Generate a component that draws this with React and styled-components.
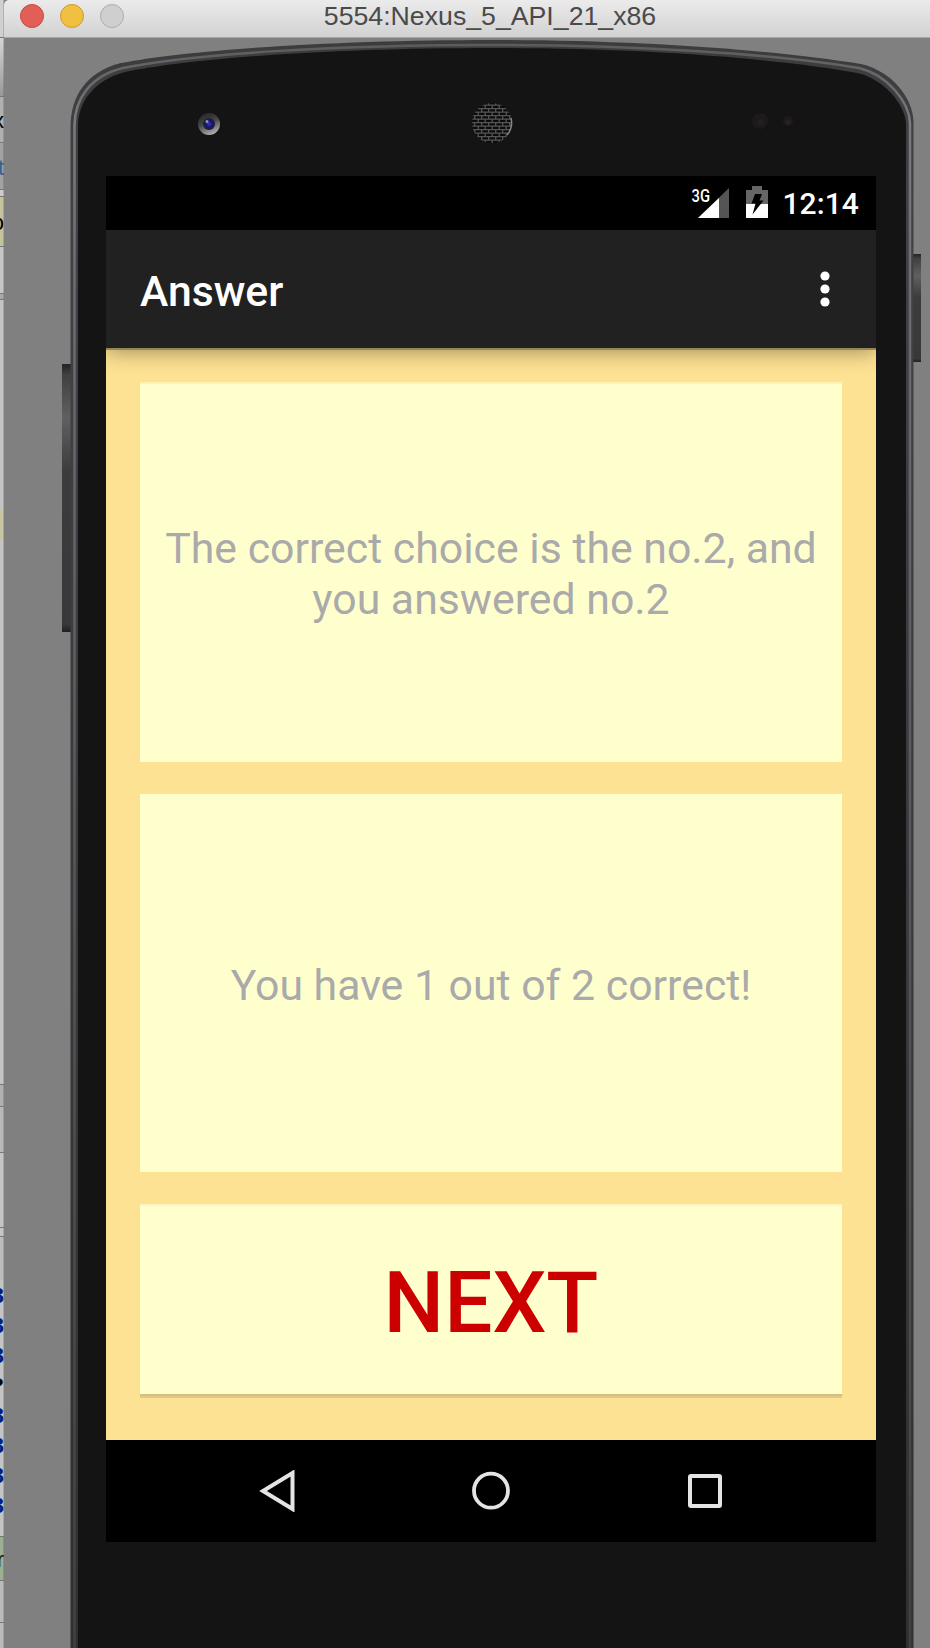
import React from 'react';
import styled, { createGlobalStyle } from 'styled-components';

const Global = createGlobalStyle`
  * { box-sizing: border-box; }
  body { margin: 0; background: #808080; font-family: Roboto, sans-serif; }
`;

const Desktop = styled.div`
  display: flex;
  width: 930px;
  height: 1648px;
  overflow: hidden;
  background: #808080;
`;

/* Edge of the editor window lying behind the emulator */
const BehindWindow = styled.div`
  flex: none;
  width: 4px;
  height: 1648px;
  display: flex;
  flex-direction: column;
  overflow: hidden;
`;

const Strip = styled.div`
  flex: none;
  height: ${(p) => p.$h}px;
  background: ${(p) => p.$bg || '#c4c4c4'};
  border-bottom: ${(p) => (p.$line ? '1px solid #777' : '0')};
  box-shadow: inset -1px 0 rgba(0, 0, 0, 0.15);
  color: ${(p) => p.$color || '#000'};
  font: ${(p) => (p.$bold ? 'bold' : 'normal')} 22px/${(p) => p.$h + 2}px 'Liberation Sans', Arial, sans-serif;
  overflow: hidden;
  display: flex;
  justify-content: flex-end;
`;

const EmulatorWindow = styled.div`
  flex: none;
  width: 926px;
  height: 1648px;
  display: flex;
  flex-direction: column;
`;

const TitleBar = styled.header`
  flex: none;
  height: 38px;
  display: grid;
  grid-template-columns: 120px 1fr 74px;
  align-items: center;
  background: linear-gradient(#ebebeb, #d2d2d2);
  border-bottom: 1px solid #a8a8a8;
  border-top-left-radius: 5px;
`;

const Lights = styled.div`
  display: flex;
  gap: 16px;
  padding: 0 0 5px 16px;
`;

const Light = styled.span`
  width: 24px;
  height: 24px;
  border-radius: 50%;
  background: ${(p) => p.$fill};
  border: 1px solid ${(p) => p.$edge};
`;

const WindowTitle = styled.h1`
  margin: 0;
  padding-bottom: 5px;
  text-align: center;
  font: 400 26.7px/32px 'Liberation Sans', Arial, sans-serif;
  color: #4a4a4a;
  white-space: nowrap;
`;

const Device = styled.main`
  position: relative;
  flex: 1;
  display: flex;
  flex-direction: column;
  padding: 138px 0 0 102px;
`;

const Shell = styled.svg`
  position: absolute;
  left: 0;
  top: 0;
`;

const Screen = styled.section`
  position: relative;
  width: 770px;
  height: 1366px;
  display: flex;
  flex-direction: column;
  overflow: hidden;
  background: #000;
`;

const StatusBar = styled.div`
  flex: none;
  height: 54px;
  display: flex;
  align-items: center;
  justify-content: flex-end;
  padding-right: 17px;
  color: #fff;
`;

const Clock = styled.span`
  padding-top: 2px;
  font-size: 30px;
  font-weight: 500;
  line-height: 52px;
  letter-spacing: 0.1px;
`;

const AppBar = styled.div`
  flex: none;
  position: relative;
  height: 118px;
  display: flex;
  align-items: center;
  justify-content: space-between;
  padding: 0 45px 0 34px;
  background: #212121;
  box-shadow: 0 2px 0 #988754, 0 4px 20px rgba(0, 0, 0, 0.38);
`;

const AppTitle = styled.h2`
  margin: 0;
  padding-top: 4px;
  font-size: 42.7px;
  font-weight: 500;
  color: #fff;
`;

const Content = styled.div`
  flex: none;
  height: 1092px;
  display: flex;
  flex-direction: column;
  gap: 32px;
  padding: 34px 34px 0;
  background: #fee293;
`;

const Card = styled.div`
  flex: none;
  height: ${(p) => p.$h}px;
  display: flex;
  align-items: center;
  justify-content: center;
  text-align: center;
  padding-top: 2px;
  background: #ffffce;
  border-top: 2px solid ${(p) => p.$edge || '#ffffce'};
  color: #aaa;
  font-size: 42.8px;
  line-height: 51px;
  white-space: nowrap;
`;

const NextButton = styled.button`
  flex: none;
  height: 190px;
  border: 0;
  border-top: 2px solid #fef5c0;
  padding: 6px 0 0;
  background: #ffffce;
  box-shadow: 0 2px #d5bf7c, 0 4px #deca86;
  color: #c00;
  font: 500 85.4px/100px Roboto, sans-serif;
`;

const NavBar = styled.nav`
  flex: none;
  height: 102px;
  display: flex;
  align-items: center;
  justify-content: space-between;
  padding: 0 152px 0 152px;
`;

const sliver = [
  { h: 38, bg: '#d0d0d0', line: true },
  { h: 59, bg: 'linear-gradient(#d5d5d5,#999)', line: true },
  { h: 46, bg: '#b0b0b0', line: true, glyph: 'x' },
  { h: 47, bg: '#a2a2a2', line: true, glyph: 't', color: '#326097' },
  { h: 7, bg: '#ccc', line: true },
  { h: 50, bg: '#c5c39c', line: true, glyph: 'o' },
  { h: 47, bg: '#c6c6c6', line: true },
  { h: 6, bg: '#aaa', line: true },
  { h: 210, bg: '#c4c4c4' },
  { h: 30, bg: '#c7c5a4' },
  { h: 545, bg: '#c4c4c4', line: true },
  { h: 22, bg: '#b0b0b0', line: true },
  { h: 46, bg: '#b8b8b8', line: true },
  { h: 75, bg: '#c5c5c5', line: true },
  { h: 9, bg: '#c5c5c5', line: true },
  { h: 43, bg: '#bcbcbc' },
  { h: 30, glyph: '3', color: '#001d85', bold: true },
  { h: 30, glyph: '3', color: '#001d85', bold: true },
  { h: 30, glyph: '3', color: '#001d85', bold: true },
  { h: 30, glyph: '?', color: '#000', bold: true },
  { h: 30, glyph: '3', color: '#001d85', bold: true },
  { h: 30, glyph: '3', color: '#001d85', bold: true },
  { h: 30, glyph: '3', color: '#001d85', bold: true },
  { h: 30, glyph: '3', color: '#001d85', bold: true },
  { h: 17, bg: '#c4c4c4', line: true },
  { h: 44, bg: '#9bb091', line: true, glyph: 'r', color: '#2a0500' },
  { h: 42, bg: '#bbb', line: true },
  { h: 30, bg: '#bbb' },
];

function DeviceShell() {
  return (
    <Shell width="926" height="1610" viewBox="0 0 926 1610" aria-hidden="true">
      <defs>
        <linearGradient id="rim" x1="0" y1="0" x2="0" y2="1">
          <stop offset="0" stopColor="#3c3c3d" />
          <stop offset=".1" stopColor="#424246" />
          <stop offset="1" stopColor="#303031" />
        </linearGradient>
        <linearGradient id="shine" x1="0" y1="0" x2="0" y2="1">
          <stop offset="0" stopColor="#5c5c60" />
          <stop offset=".05" stopColor="#7c7c80" />
          <stop offset=".15" stopColor="#6c6c72" />
          <stop offset=".5" stopColor="#57575c" />
          <stop offset="1" stopColor="#414142" />
        </linearGradient>
        <linearGradient id="key" x1="0" y1="0" x2="0" y2="1">
          <stop offset="0" stopColor="#222" />
          <stop offset=".04" stopColor="#404040" />
          <stop offset=".2" stopColor="#606060" />
          <stop offset=".4" stopColor="#3c3c3c" />
          <stop offset=".97" stopColor="#383838" />
          <stop offset="1" stopColor="#1f1f1f" />
        </linearGradient>
        <radialGradient id="lens">
          <stop offset="0" stopColor="#3a3ab0" />
          <stop offset=".5" stopColor="#17177a" />
          <stop offset="1" stopColor="#20202c" />
        </radialGradient>
        <linearGradient id="lensRing" x1="0.2" y1="0" x2=".6" y2="1">
          <stop offset="0" stopColor="#242424" />
          <stop offset=".45" stopColor="#444" />
          <stop offset="1" stopColor="#b0b0b0" />
        </linearGradient>
        <pattern id="mesh" width="7" height="7" patternUnits="userSpaceOnUse">
          <rect width="7" height="7" fill="#0b0b0b" />
          <path d="M0 .7H7M0 4.2H7M1.7 .7V4.2M5.200 4.200V7.700" stroke="#555" strokeWidth="1.3" />
        </pattern>
        <clipPath id="speaker"><circle cx="488" cy="85" r="20" /></clipPath>
      </defs>
      <rect x="58" y="326" width="10" height="268" fill="url(#key)" />
      <rect x="909" y="216" width="8" height="108" fill="url(#key)" />
      <path d="M66.500 1610 V88 C67 58 82 34 117 25 C190 11 340 2 488 2 C635 2 771 12 857 26 C888 33 909 60 909.500 84 V1610 Z" fill="url(#rim)" />
      <path d="M70.500 1610 V87 C71 61 86 38 119 30 C192 15 340 7 488 7 C635 7 771 16 855 30 C884 37 905 64 906 85 V1610" fill="none" stroke="url(#shine)" strokeWidth="2.500" />
      <path d="M74 1610 V88 C74 63 91 42 121 34 C194 19 340 10 488 10 C635 10 771 20 853 35 C880 41 901 66 902 86 V1610 Z" fill="#141414" />
      <circle cx="205" cy="86" r="11" fill="url(#lensRing)" />
      <circle cx="205" cy="86" r="6" fill="url(#lens)" />
      <circle cx="203" cy="83.500" r="1.500" fill="#8d97c0" />
      <g clipPath="url(#speaker)"><rect x="468" y="65" width="40" height="40" fill="url(#mesh)" /></g>
      <path d="M503 97A19 19 0 0 0 507 80" fill="none" stroke="#858585" strokeWidth="1.500" />
      <circle cx="756" cy="83" r="8" fill="#1c1b1b" />
      <circle cx="757" cy="84" r="3" fill="#281e1d" />
      <circle cx="784" cy="83" r="5" fill="#1e1b1b" />
      <circle cx="784" cy="84" r="2.500" fill="#2a2220" />
    </Shell>
  );
}

function StatusIcons() {
  return (
    <svg width="91" height="54" viewBox="0 0 91 54" aria-label="3G signal, battery charging">
      <text x="0.500" y="25.500" fill="#fff" fontFamily="Roboto, sans-serif" fontWeight="500" fontSize="18.500" textLength="18.500" lengthAdjust="spacingAndGlyphs">3G</text>
      <path d="M38 12V42H7Z" fill="#555" />
      <path d="M28 22V42H7Z" fill="#fff" />
      <path d="M61 10H71V14H77V28H55V14H61Z" fill="#666" />
      <path d="M55 28H77V42H55Z" fill="#fff" />
      <path d="M64 18H71L68.500 24.500H72.500L61.500 38.500L64.500 27.500H60.500Z" fill="#000" />
    </svg>
  );
}

export default function App() {
  return (
    <>
      <Global />
      <Desktop>
        <BehindWindow>
          {sliver.map((s, i) => (
            <Strip key={i} $h={s.h} $bg={s.bg} $line={s.line} $color={s.color} $bold={s.bold}>
              {s.glyph}
            </Strip>
          ))}
        </BehindWindow>
        <EmulatorWindow>
          <TitleBar>
            <Lights>
              <Light $fill="#e25f58" $edge="#c84a43" />
              <Light $fill="#f0c040" $edge="#cf9a2c" />
              <Light $fill="#cfcfcf" $edge="#acacac" />
            </Lights>
            <WindowTitle>5554:Nexus_5_API_21_x86</WindowTitle>
          </TitleBar>
          <Device>
            <DeviceShell />
            <Screen>
              <StatusBar>
                <StatusIcons />
                <Clock>12:14</Clock>
              </StatusBar>
              <AppBar>
                <AppTitle>Answer</AppTitle>
                <svg width="12" height="36" viewBox="0 0 12 36" fill="#fff" aria-label="More options">
                  <circle cx="6" cy="5" r="4.600" />
                  <circle cx="6" cy="18" r="4.600" />
                  <circle cx="6" cy="31" r="4.600" />
                </svg>
              </AppBar>
              <Content>
                <Card $h={380} $edge="#fef3b2">The correct choice is the no.2, and<br />you answered no.2</Card>
                <Card $h={378}>You have 1 out of 2 correct!</Card>
                <NextButton>NEXT</NextButton>
              </Content>
              <NavBar>
                <svg width="38" height="42" viewBox="0 0 38 42" aria-label="Back">
                  <path d="M34.500 3V39L5 21Z" fill="none" stroke="#e4e4e4" strokeWidth="4" />
                </svg>
                <svg width="38" height="40" viewBox="0 0 38 40" aria-label="Home">
                  <ellipse cx="19" cy="19.700" rx="17" ry="17" fill="none" stroke="#e4e4e4" strokeWidth="3.800" />
                </svg>
                <svg width="38" height="40" viewBox="0 0 38 40" aria-label="Recent apps">
                  <rect x="4" y="5" width="30" height="30" rx="1" fill="none" stroke="#e4e4e4" strokeWidth="4" />
                </svg>
              </NavBar>
            </Screen>
          </Device>
        </EmulatorWindow>
      </Desktop>
    </>
  );
}
